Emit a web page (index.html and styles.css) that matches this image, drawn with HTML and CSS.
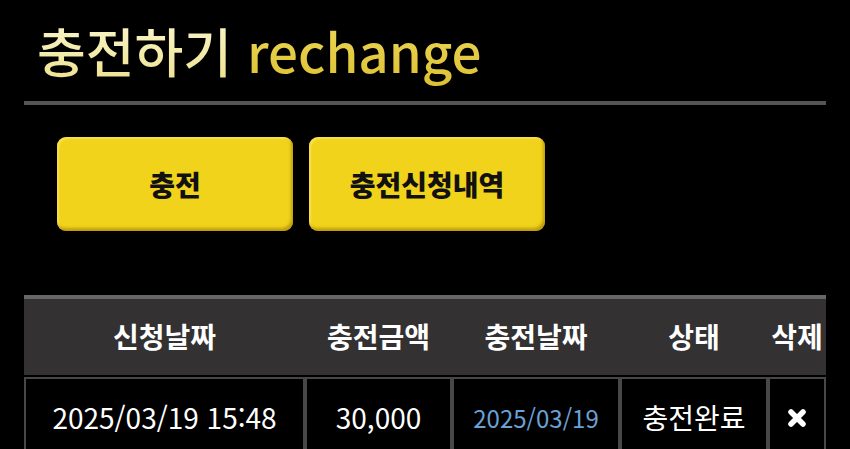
FILE: index.html
```html
<!DOCTYPE html>
<html lang="ko">
<head>
    <meta charset="UTF-8">
    <title>충전하기</title>
    <link rel="stylesheet" href="styles.css">
</head>
<body>
<div class="wrap">
    <h1 class="title"><span class="title-ko">충전하기</span> <span class="title-en">rechange</span></h1>

    <div class="tabs">
        <a class="tab-btn" href="#">충전</a>
        <a class="tab-btn" href="#">충전신청내역</a>
    </div>

    <table class="history">
        <colgroup>
            <col class="c-req">
            <col class="c-amount">
            <col class="c-date">
            <col class="c-state">
            <col class="c-del">
        </colgroup>
        <thead>
        <tr>
            <th>신청날짜</th>
            <th>충전금액</th>
            <th>충전날짜</th>
            <th>상태</th>
            <th>삭제</th>
        </tr>
        </thead>
        <tbody>
        <tr>
            <td class="req">2025/03/19 15:48</td>
            <td class="amount">30,000</td>
            <td class="date">2025/03/19</td>
            <td class="state">충전완료</td>
            <td class="del">
                <svg width="20" height="20" viewBox="0 0 20 20">
                    <path d="M4 4 L16 16 M16 4 L4 16" stroke="#fff" stroke-width="5.5" stroke-linecap="round"/>
                </svg>
            </td>
        </tr>
        </tbody>
    </table>
</div>
</body>
</html>
```

FILE: styles.css
```css
* {
    padding: 0;
    margin: 0;
    box-sizing: border-box;
}

body {
    background: #000;
    font-family: "Noto Sans CJK KR", "Noto Sans", sans-serif;
    color: #fff;
    overflow: hidden;
}

.wrap {
    padding: 0 24px;
}

/* 제목 */
.title {
    font-size: 53px;
    font-weight: 500;
    line-height: 64px;
    padding: 18px 0 0 13px;
    height: 105px;
    border-bottom: 4px solid #555;
}

.title-ko {
    background: linear-gradient(#fcf8d2, #ece08a);
    -webkit-background-clip: text;
    color: transparent;
}

.title-en {
    background: linear-gradient(#f0da5c, #dcc032);
    -webkit-background-clip: text;
    color: transparent;
}

/* 버튼 */
.tabs {
    display: flex;
    gap: 16px;
    padding: 32px 0 0 33px;
}

.tab-btn {
    display: flex;
    align-items: center;
    justify-content: center;
    width: 236px;
    height: 94px;
    background: #f1d31c;
    border-radius: 9px;
    box-shadow: inset -2px -3px 3px rgba(150, 115, 0, 0.55), inset 2px 2px 2px rgba(255, 240, 130, 0.5);
    color: #111;
    font-size: 28px;
    font-weight: 900;
    text-decoration: none;
}

/* 내역 테이블 */
.history {
    width: 802px;
    margin-top: 64px;
    table-layout: fixed;
    border-collapse: separate;
    border-spacing: 0;
    border-top: 4px solid #676767;
}

.c-req { width: 281px; }
.c-amount { width: 147px; }
.c-date { width: 168px; }
.c-state { width: 148px; }
.c-del { width: 58px; }

.history th {
    height: 78px;
    background: #333132;
    border-bottom: 2px solid #000;
    font-size: 28px;
    font-weight: 700;
    text-align: center;
    padding-bottom: 2px;
}

.history td {
    height: 80px;
    border: 2px solid #474747;
    text-align: center;
    font-size: 28px;
    font-weight: 400;
    white-space: nowrap;
}

.history td.date {
    font-size: 24px;
    color: #6aa2d6;
}

.history td.del svg {
    display: block;
    margin: 2px auto 0;
}
```
